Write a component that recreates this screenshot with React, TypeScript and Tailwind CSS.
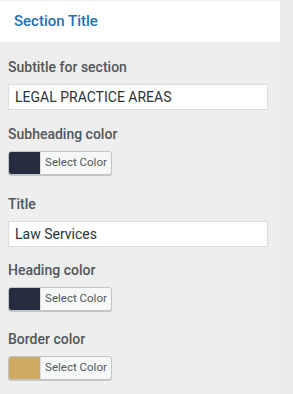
import React from "react";

function Label({ children }: { children: React.ReactNode }) {
  return (
    <div className="text-[14px] leading-[20px] font-medium text-[#50575e]">{children}</div>
  );
}

function TextInput({ value }: { value: string }) {
  return (
    <div className="mt-[7px] h-[26px] w-[260px] border border-[#dcdcde] bg-white pl-[6px] flex items-center text-[14px] text-[#2c3338]">
      {value}
    </div>
  );
}

function ColorButton({ color }: { color: string }) {
  return (
    <div className="mt-[7px] flex h-[24px] w-[104px] overflow-hidden rounded-[3px] border border-[#c3c4c7] bg-[#f6f7f7] shadow-[0_1px_0_#c3c4c7]">
      <div className="h-full w-[31px]" style={{ backgroundColor: color }} />
      <div className="flex flex-1 items-center justify-center border-l border-[#dcdcde] text-[11.5px] text-[#50575e]">
        Select Color
      </div>
    </div>
  );
}

export default function App() {
  return (
    <div
      className="relative h-[394px] w-[293px] overflow-hidden bg-[#eeeeee]"
      style={{ fontFamily: "Roboto, 'Noto Sans', sans-serif" }}
    >
      <div className="absolute right-0 top-0 h-full w-[13px] bg-[#ebebeb]" />
      <div className="relative w-[280px]">
        <div className="mt-[1px] flex h-[41px] items-center bg-white pl-[14px] text-[15px] font-medium text-[#2271b1]">
          Section Title
        </div>
        <div className="flex flex-col px-[8px] pt-[15px]">
          <Label>Subtitle for section</Label>
          <TextInput value="LEGAL PRACTICE AREAS" />
          <div className="h-[14px]" />
          <Label>Subheading color</Label>
          <ColorButton color="#262c40" />
          <div className="h-[19px]" />
          <Label>Title</Label>
          <TextInput value="Law Services" />
          <div className="h-[13px]" />
          <Label>Heading color</Label>
          <ColorButton color="#262c40" />
          <div className="h-[18px]" />
          <Label>Border color</Label>
          <ColorButton color="#cdab64" />
        </div>
      </div>
    </div>
  );
}
